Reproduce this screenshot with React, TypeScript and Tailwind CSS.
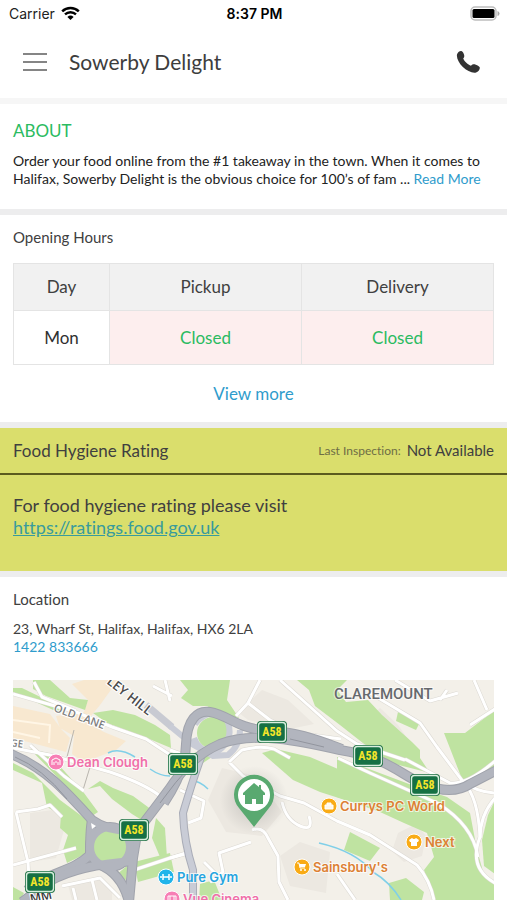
import type { ReactNode } from "react";

function Divider() {
  return <div className="h-[6px] shrink-0 bg-[#ededee]" />;
}

function StatusBar() {
  return (
    <div className="grid h-7 shrink-0 grid-cols-3 items-center pr-[7px] pb-[2px] pl-[9px] font-['Inter',sans-serif] text-[14px] text-black">
      <div className="flex items-center gap-[6px]">
        <span className="text-[#222]">Carrier</span>
        <svg width="19" height="15" viewBox="0 0 19 15" fill="none" stroke="#000" aria-hidden="true">
          <path d="M1.2 5.3a12 12 0 0 1 16.6 0" strokeWidth="2.5" />
          <path d="M4 8.4a8 8 0 0 1 11 0" strokeWidth="2.4" />
          <path d="M9.5 14 6.4 10.900a4.500 4.500 0 0 1 6.200 0z" fill="#000" stroke="none" />
        </svg>
      </div>
      <span className="text-center font-semibold">8:37 PM</span>
      <svg className="justify-self-end" width="30" height="15" viewBox="0 0 30 15" aria-hidden="true">
        <rect x="1" y="1" width="25" height="13" rx="4" fill="#fff" stroke="#bdbdbd" strokeWidth="1.500" />
        <rect x="2.500" y="3" width="22" height="9" rx="1.500" fill="#000" />
        <path d="M27.500 5v5q2-.5 2-2.500t-2-2.500" fill="#aaa" />
      </svg>
    </div>
  );
}

function Header() {
  return (
    <header className="flex h-[70px] shrink-0 items-center bg-white px-[23px] pb-[2px]">
      <button type="button" aria-label="Open menu" className="flex w-6 flex-col gap-[6px]">
        <span className="h-[2px] bg-[#858585]" />
        <span className="h-[2px] bg-[#858585]" />
        <span className="h-[2px] bg-[#858585]" />
      </button>
      <h1 className="ml-[22px] flex-1 text-[21px] leading-7 text-[#3d3d3d]">Sowerby Delight</h1>
      <button type="button" aria-label="Call" className="mr-1">
        <svg width="24" height="24" viewBox="0 0 24 24" aria-hidden="true">
          <path
            d="M1 4.500C1.500 2.300 3.600.7 5.400 1c1.100.2 2.200 2 2.700 3.800.5 1.800-.1 2.800-.9 3.700 1.100 2.800 4.700 6.200 7.800 7.300 1.500-1.600 2.900-1.800 4.800-1.100 1.900.7 3.700 1.700 4 2.800.3 1.800-1.600 4.300-3.700 5-3.600 1-9.200-1.600-13.500-5.800C3 13 .3 8 1 4.500z"
            fill="#333"
          />
        </svg>
      </button>
    </header>
  );
}

function Shield({ x, y }: { x: number; y: number }) {
  return (
    <g transform={`translate(${x} ${y})`}>
      <rect x="-15" y="-11" width="30" height="22" rx="4" fill="#1f7044" />
      <rect x="-13.500" y="-9.500" width="27" height="19" rx="3" fill="#167044" stroke="#d9efdf" strokeWidth="1.400" />
      <text y="4" textAnchor="middle" fontSize="12" fontWeight="700" fill="#f5e52a" fontFamily="'Liberation Sans Narrow', 'Roboto Condensed', Roboto, sans-serif">
        A58
      </text>
    </g>
  );
}

function Place({ x, y, color, dot, label, size, children }: { x: number; y: number; color: string; dot: string; label: string; size: number; children: ReactNode }) {
  return (
    <g transform={`translate(${x} ${y})`}>
      <circle r="8" fill={dot} stroke="#fff" strokeWidth="1" />
      {children}
      <text x="11" y="5" fontSize={size} fontWeight="600" fill={color} stroke="#fff" strokeWidth="2" strokeOpacity=".7" paintOrder="stroke" fontFamily="Inter, sans-serif">
        {label}
      </text>
    </g>
  );
}

const parks = [
  "33,680 50,680 70,698 88,700 85,710 46,696 33,689",
  "13,688 22,688 63,708 60,713 13,692",
  "93,713 113,710 135,715 155,725 170,735 171,748 147,738 107,723",
  "30,749 48,753 84,793 98,812 92,816 60,780",
  "13,763 33,773 60,800 87,820 90,837 87,853 67,863 63,850 68,835 60,828 61,815 47,807 42,783 13,770",
  "88,789 100,781 113,788 133,796 152,810 148,824 132,814 112,799 100,786",
  "156,818 165,828 167,858 160,857 152,838",
  "134,862 170,853 174,872 138,882",
  "55,875 84,861 94,868 70,874 52,884",
  "116,875 128,865 126,880",
  "13,887 24,893 20,900 13,900",
  "180,680 230,680 227,700 239,718 223,715 207,706 193,706 181,698 188,690",
  "297,680 347,680 337,690 346,702 368,700 382,715 412,742 420,750 420,758 430,773 387,762 340,725 315,706 309,690",
  "262,753 276,749 310,757 345,772 345,800 320,792 293,780",
  "337,757 417,787 447,797 470,813 477,850 484,875 495,883 495,900 434,900 424,870 434,857 427,833 404,823 380,812 337,797",
  "444,733 465,733 495,710 495,769 480,780 462,779",
  "495,800 495,874 484,866 482,840 488,815",
  "398,712 420,722 416,730 396,721",
  "350,832 380,848 370,861 344,850",
  "389,883 406,878 424,892 422,900 390,900",
  "200,884 214,880 222,900 199,900",
  "190,755 205,748 212,757 200,765",
];

const blocks = [
  "72,684 84,680 118,680 100,705 86,722 104,732 126,741 116,750 95,758 92,768 72,754 74,736 60,728 56,716 84,712 88,700",
  "13,706 50,714 62,730 70,738 66,752 13,738",
];

const yards = [
  "30,813 60,809 64,830 56,858 30,862",
  "68,885 96,877 112,890 112,900 72,900",
  "222,768 256,776 282,812 262,836 226,832 208,800",
  "238,712 262,690 288,700 314,724 290,729 248,720",
  "308,762 336,768 334,783 316,778",
  "365,722 380,708 398,725 412,745 405,757 384,742",
  "398,833 416,824 426,836 422,856 404,862 392,851",
  "280,856 300,842 330,852 326,893 290,886",
];

const streets = [
  "M13 694L76 712L112 727L146 739L178 760",
  "M34 682L42 697L76 711",
  "M30 745L64 776L84 791",
  "M13 748L50 755L110 772Q145 784 160 796",
  "M13 865L76 848",
  "M16 812L38 809L50 805L62 817M16 812L28 862L29 878",
  "M134 870L170 858L186 853",
  "M62 886L100 878L120 898M76 900L73 888M97 900L92 880",
  "M153 686L172 696M165 680L170 701",
  "M280 680L317 713L337 731L357 744L405 760",
  "M260 680L248 703L236 716M248 703L270 720L285 727",
  "M297 733L341 739",
  "M370 693L420 723L437 747L464 783Q478 797 480 837Q468 868 495 883",
  "M338 758L370 773L437 803Q473 825 478 857",
  "M405 759L450 783Q467 785 495 761M460 780Q476 792 495 793M495 798Q480 815 480 838",
  "M474 680L487 710M470 725L495 709",
  "M395 680L430 701L458 693M440 700L447 690",
  "M229 762L242 750Q260 745 274 749L290 758M229 762L243 776L280 796L304 803L337 821L370 835L417 865Q430 880 434 900",
  "M252 830Q263 826 268 838L278 856L279 882L288 900",
  "M251 842L219 853L223 872L210 882",
  "M170 750L190 757M180 790L204 801L201 818L188 823",
  "M282 802Q286 820 300 826T309 816",
  "M337 874L355 900",
  "M170 858L185 854M204 862L222 880",
];

const ramps = [
  "M203 752Q194 776 183 813Q184 842 193 870L193 902",
  "M170 726L192 744L213 756L228 755Q240 746 240 730",
  "M195 724Q210 706 226 718Q236 738 218 751Q200 754 194 738",
];

const trunks = [
  "M11 754C45 768 65 790 92 820Q110 833 138 830Q150 815 170 788Q190 757 220 744C255 731 300 741 340 750C390 758 400 775 423 784Q452 796 470 784L497 770",
  "M164 803Q186 770 186 744C187 720 197 710 210 712C228 715 237 728 263 730C297 732 315 739 342 749",
  "M92 820Q90 830 90 855C72 872 48 872 27 890",
  "M138 828L133 858L129 902",
  "M133 861Q78 865 50 881L22 902",
  "M98 864Q122 873 129 902",
];

function MapView() {
  return (
    <svg className="block min-h-0 w-full flex-1 bg-[#f3f0e9]" viewBox="13 680 481 220" preserveAspectRatio="xMidYMin slice" role="img" aria-label="Map of the restaurant's location">
      <defs>
        <radialGradient id="pin-shadow">
          <stop offset="0" stopColor="#777" stopOpacity=".35" />
          <stop offset="1" stopColor="#777" stopOpacity="0" />
        </radialGradient>
      </defs>
      <g fill="#ece8e1">{yards.map((p) => <polygon key={p} points={p} />)}</g>
      <g fill="#f8e8d0">{blocks.map((p) => <polygon key={p} points={p} />)}</g>
      <g fill="#bfe3a1">{parks.map((p) => <polygon key={p} points={p} />)}</g>
      <g fill="none" stroke="#fff6e6" strokeWidth="2">
        <path d="M13 720L50 725L49 743M13 732L40 738" />
      </g>
      <g fill="none" stroke="#b9b5ae" strokeWidth="1">
        <path d="M74 730L67 757M90 767L83 790" />
      </g>
      <g fill="none" stroke="#7fcfe8" strokeWidth="1.500">
        <path d="M108 753Q119 747 135 757M150 769Q160 776 170 776M190 780Q200 781 208 789M319 843Q355 851 373 872Q390 882 401 900" />
      </g>
      <g fill="none" stroke="#dcd9d3" strokeWidth="4" strokeLinejoin="round">{streets.map((d) => <path key={d} d={d} />)}</g>
      <g fill="none" stroke="#fff" strokeWidth="3" strokeLinejoin="round">{streets.map((d) => <path key={d} d={d} />)}</g>
      <path d="M146 705L172 727" stroke="#c8cad2" strokeWidth="7" />
      <circle cx="213" cy="733" r="16" fill="#bfe3a1" />
      <g fill="none" stroke="#aaadb8" strokeWidth="8">{ramps.slice(0, 1).map((d) => <path key={d} d={d} />)}</g>
      <g fill="none" stroke="#c9ccd6" strokeWidth="6">{ramps.map((d) => <path key={d} d={d} />)}</g>
      <g fill="none" stroke="#a0a3ac" strokeWidth="10">
        {trunks.map((d) => <path key={d} d={d} />)}
        <circle cx="110" cy="847" r="20" />
      </g>
      <circle cx="110" cy="847" r="20" fill="#bfe3a1" />
      <g fill="none" stroke="#b2b5be" strokeWidth="8">
        {trunks.map((d) => <path key={d} d={d} />)}
        <circle cx="110" cy="847" r="20" />
      </g>
      <path d="M15 757Q42 768 67 799M160 803Q175 782 192 764M290 739L324 747" fill="none" stroke="#92959e" strokeWidth="1" />
      <path d="M91 823L96 826L92 829z" fill="#fff" />

      <g fill="#7d7d7d" stroke="#fff" strokeWidth="2" paintOrder="stroke" fontFamily="'Open Sans', sans-serif" fontWeight="600">
        <text transform="translate(53 711) rotate(20)" fontSize="11">OLD LANE</text>
        <text transform="translate(10 746) rotate(8)" fontSize="10">GE</text>
        <text transform="translate(106 683) rotate(38)" fontSize="13" fill="#4c4c4c">LEY HILL</text>
        <text transform="translate(31 903) rotate(-12)" fontSize="12" fill="#333">MM</text>
      </g>
      <text x="334" y="699" fontSize="15" fontWeight="500" fill="#66696d" stroke="#fff" strokeWidth="2" strokeOpacity=".6" paintOrder="stroke" fontFamily="Roboto, sans-serif">
        CLAREMOUNT
      </text>

      <Place x={56} y={762} color="#f06fa9" dot="#f77fb5" label="Dean Clough" size={13}>
        <path d="M-4 3V-2L0-4L4-2V3M-2 3V0M2 3V0M0-1V1" fill="none" stroke="#fff" strokeWidth="1" />
      </Place>
      <Place x={329} y={806} color="#dd8134" dot="#f9ab16" label="Currys PC World" size={13}>
        <path d="M-4-1H4V3H-4zM-2-1V-3H2V-1" fill="#fff" stroke="#fff" strokeWidth="1" fillOpacity=".9" />
      </Place>
      <Place x={414} y={842} color="#dd8134" dot="#f9ab16" label="Next" size={13}>
        <path d="M-2-4Q0-2 2-4L5-2L4 0H3V4H-3V0H-4L-5-2z" fill="#fff" />
      </Place>
      <Place x={302} y={867} color="#dd8134" dot="#f9ab16" label="Sainsbury's" size={13}>
        <path d="M-5-4H-3L-2 1H3" fill="none" stroke="#fff" strokeWidth="1" />
        <path d="M-3-3H4L3 0H-2z" fill="#fff" />
        <circle cx="-1" cy="3" r="1" fill="#fff" />
        <circle cx="3" cy="3" r="1" fill="#fff" />
      </Place>
      <Place x={166} y={877} color="#26a5e0" dot="#20b4ea" label="Pure Gym" size={13}>
        <path d="M-5-1V1M-3-3V3M-3 0H3M3-3V3M5-1V1" stroke="#fff" strokeWidth="1.500" />
      </Place>
      <Place x={172} y={899} color="#f06fa9" dot="#f77fb5" label="Vue Cinema" size={13}>
        <path d="M-4-3H4V3H-4zM-2-3V3M2-3V3" fill="none" stroke="#fff" strokeWidth="1" />
      </Place>

      <Shield x={272} y={732} />
      <Shield x={183} y={764} />
      <Shield x={368} y={756} />
      <Shield x={425} y={785} />
      <Shield x={134} y={830} />
      <Shield x={40} y={882} />

      <circle cx="254" cy="800" r="34" fill="url(#pin-shadow)" />
      <path d="M254 827L239 808A20 20 0 1 1 269 808z" fill="#59a970" />
      <circle cx="254" cy="795" r="16" fill="#fff" />
      <path d="M254 783L243 793V795H245V804H252V799H256V804H263V795H265V793L261 789V785H259V787z" fill="#59a970" />
    </svg>
  );
}

export default function App() {
  return (
    <div className="flex h-screen flex-col overflow-hidden bg-white font-['Lato',sans-serif] text-[#404040] [font-variant-ligatures:none]">
      <StatusBar />
      <Header />
      <div className="h-[6px] shrink-0 bg-[#f6f6f6]" />
      <main className="flex min-h-0 flex-1 flex-col">
        <section className="px-[13px] pt-[17px] pb-[21px]">
          <h2 className="text-[17px] leading-5 text-[#2bbb61]">ABOUT</h2>
          <p className="mt-[11px] text-[14px] leading-[18px] text-[#222]">
            Order your food online from the #1 takeaway in the town. When it comes to Halifax, Sowerby Delight is the obvious choice for 100’s of fam ...{" "}
            <a href="#about" className="text-[#2f9ccc]">Read More</a>
          </p>
        </section>
        <Divider />
        <section className="px-[13px] pt-3 pb-[17px]">
          <h2 className="text-[15px] leading-5">Opening Hours</h2>
          <table className="mt-4 w-full table-fixed border-collapse border border-[#e4e4e4] text-center text-[17px]">
            <thead>
              <tr className="h-[47px] bg-[#f1f1f1]">
                <th className="w-1/5 border border-[#e4e4e4] font-normal">Day</th>
                <th className="w-2/5 border border-[#e4e4e4] font-normal">Pickup</th>
                <th className="w-2/5 border border-[#e4e4e4] font-normal">Delivery</th>
              </tr>
            </thead>
            <tbody>
              <tr className="h-[54px]">
                <th scope="row" className="border border-[#e4e4e4] font-normal text-[#303030]">Mon</th>
                <td className="border border-[#e4e4e4] bg-[#fdeeee] text-[#2bbb61]">Closed</td>
                <td className="border border-[#e4e4e4] bg-[#fdeeee] text-[#2bbb61]">Closed</td>
              </tr>
            </tbody>
          </table>
          <button type="button" className="mx-auto mt-[18px] block text-[17px] leading-[22px] text-[#2f9ccc]">View more</button>
        </section>
        <Divider />
        <section className="bg-[#dade6c]">
          <div className="flex h-[47px] items-center border-b-2 border-[#5b5b1e] px-[13px]">
            <h2 className="flex-1 text-[17px]">Food Hygiene Rating</h2>
            <span className="text-[12px] text-[#6e6d45]">Last Inspection:</span>
            <span className="ml-[6px] text-[15px]">Not Available</span>
          </div>
          <p className="px-[13px] pt-[19px] pb-[33px] text-[18px] leading-[22px]">
            For food hygiene rating please visit
            <br />
            <a href="https://ratings.food.gov.uk" className="text-[#389b9d] underline">https://ratings.food.gov.uk</a>
          </p>
        </section>
        <Divider />
        <section className="flex min-h-0 flex-1 flex-col px-[13px] pt-3">
          <h2 className="text-[15px] leading-5">Location</h2>
          <address className="mt-[11px] mb-6 text-[14px] leading-[18px] not-italic">
            23, Wharf St, Halifax, Halifax, HX6 2LA
            <br />
            <a href="tel:1422833666" className="text-[#2f9ccc]">1422 833666</a>
          </address>
          <MapView />
        </section>
      </main>
    </div>
  );
}
